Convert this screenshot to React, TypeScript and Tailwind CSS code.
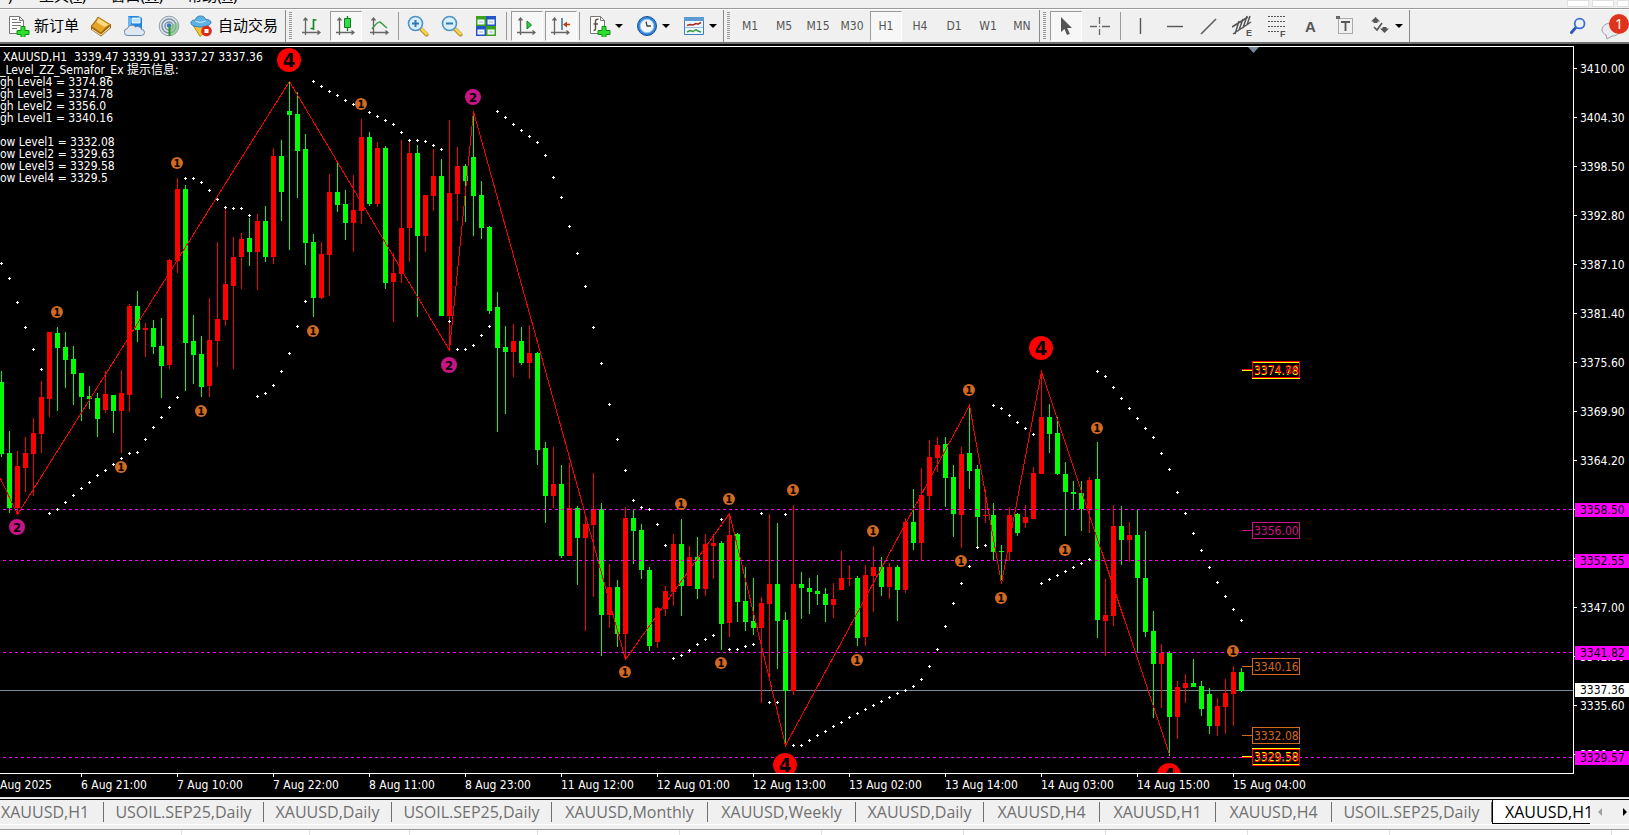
import type { ReactNode } from "react";
import clsx from "clsx";

const UP = 1;
const DN = 0;

// side, high, body top, body bottom, low
const candles = [
  [DN, 371, 382, 454, 457], [DN, 431, 453, 508, 513], [UP, 451, 466, 508, 514], [UP, 437, 453, 468, 492],
  [UP, 418, 433, 454, 496], [UP, 381, 397, 434, 453], [UP, 332, 332, 399, 417], [DN, 327, 333, 348, 411],
  [DN, 332, 347, 360, 388], [DN, 346, 359, 374, 405], [DN, 373, 373, 397, 421], [DN, 386, 396, 399, 409],
  [DN, 393, 398, 419, 437], [UP, 371, 394, 410, 413], [DN, 395, 395, 411, 433], [UP, 370, 393, 411, 453],
  [UP, 304, 306, 395, 412], [DN, 291, 306, 330, 342], [UP, 323, 328, 330, 357], [DN, 320, 328, 347, 354],
  [DN, 318, 346, 366, 398], [UP, 259, 260, 365, 369], [UP, 178, 189, 261, 273], [DN, 185, 189, 343, 391],
  [DN, 315, 341, 355, 384], [DN, 336, 354, 387, 397], [UP, 298, 340, 386, 397], [UP, 242, 319, 341, 367],
  [UP, 209, 284, 320, 326], [UP, 237, 257, 286, 369], [UP, 233, 239, 257, 289], [DN, 218, 238, 252, 266],
  [UP, 214, 221, 252, 290], [DN, 206, 221, 257, 262], [UP, 148, 156, 257, 264], [DN, 140, 156, 192, 221],
  [DN, 81, 111, 115, 250], [DN, 92, 114, 151, 198], [DN, 134, 149, 243, 265], [DN, 234, 242, 298, 317],
  [UP, 242, 254, 298, 299], [UP, 174, 192, 255, 296], [DN, 162, 192, 205, 212], [DN, 190, 204, 223, 240],
  [UP, 175, 210, 223, 252], [UP, 119, 137, 211, 224], [DN, 132, 137, 204, 206], [UP, 142, 148, 204, 207],
  [DN, 146, 148, 283, 289], [UP, 253, 273, 282, 322], [UP, 140, 228, 274, 283], [UP, 142, 153, 228, 262],
  [DN, 145, 153, 236, 317], [UP, 195, 195, 236, 252], [UP, 149, 176, 196, 211], [DN, 159, 176, 316, 316],
  [UP, 120, 193, 316, 350], [UP, 147, 166, 194, 221], [DN, 164, 166, 181, 222], [DN, 116, 157, 196, 236],
  [DN, 181, 195, 228, 239], [DN, 226, 227, 311, 314], [DN, 292, 307, 348, 432], [DN, 326, 347, 352, 414],
  [UP, 324, 341, 352, 377], [DN, 327, 341, 363, 365], [UP, 325, 353, 363, 379], [DN, 352, 353, 450, 465],
  [DN, 442, 448, 496, 523], [UP, 447, 484, 496, 508], [DN, 465, 484, 556, 558], [UP, 463, 508, 556, 556],
  [DN, 506, 508, 538, 585], [UP, 516, 524, 538, 631], [UP, 473, 509, 525, 597], [DN, 503, 509, 615, 656],
  [UP, 564, 587, 615, 628], [DN, 580, 587, 634, 647], [UP, 507, 518, 634, 659], [DN, 510, 518, 531, 564],
  [DN, 524, 530, 570, 579], [DN, 567, 570, 646, 651], [UP, 607, 608, 642, 648], [UP, 586, 591, 609, 616],
  [UP, 534, 544, 592, 606], [DN, 519, 544, 586, 616], [UP, 546, 557, 586, 586], [DN, 537, 557, 589, 599],
  [UP, 534, 544, 589, 596], [UP, 534, 543, 546, 579], [DN, 541, 543, 624, 650], [UP, 513, 535, 623, 637],
  [DN, 533, 534, 602, 622], [DN, 567, 601, 622, 631], [DN, 578, 621, 628, 635], [UP, 597, 603, 628, 703],
  [UP, 514, 584, 604, 680], [DN, 523, 584, 621, 669], [DN, 612, 620, 691, 745], [UP, 505, 584, 691, 695],
  [DN, 572, 584, 588, 619], [DN, 578, 588, 592, 614], [DN, 575, 591, 594, 605], [DN, 588, 594, 605, 622],
  [UP, 583, 599, 605, 618], [UP, 551, 578, 590, 590], [UP, 565, 578, 579, 586], [DN, 576, 578, 638, 646],
  [UP, 565, 575, 637, 646], [UP, 546, 567, 576, 612], [DN, 557, 567, 587, 596], [UP, 563, 567, 587, 599],
  [DN, 565, 567, 590, 621], [UP, 518, 522, 590, 593], [DN, 489, 522, 543, 550], [UP, 468, 495, 543, 560],
  [UP, 440, 457, 496, 510], [UP, 437, 445, 458, 472], [DN, 437, 444, 478, 507], [DN, 465, 477, 514, 537],
  [UP, 447, 454, 515, 548], [DN, 408, 453, 471, 489], [DN, 465, 469, 517, 547], [UP, 489, 515, 516, 523],
  [DN, 503, 515, 552, 560], [DN, 545, 551, 552, 580], [UP, 507, 515, 552, 561], [DN, 513, 514, 533, 536],
  [UP, 505, 517, 523, 528], [UP, 467, 473, 519, 519], [UP, 371, 417, 474, 474], [DN, 404, 417, 434, 453],
  [DN, 417, 433, 474, 475], [DN, 462, 474, 492, 536], [DN, 481, 492, 494, 509], [DN, 481, 493, 509, 531],
  [UP, 477, 480, 510, 533], [DN, 442, 479, 620, 638], [UP, 579, 615, 621, 656], [UP, 505, 526, 616, 626],
  [DN, 506, 526, 540, 565], [UP, 522, 535, 540, 562], [DN, 510, 535, 578, 652], [DN, 531, 578, 632, 637],
  [DN, 611, 631, 664, 718], [UP, 644, 653, 664, 708], [DN, 651, 653, 717, 756], [UP, 681, 687, 717, 739],
  [UP, 674, 683, 688, 703], [DN, 659, 683, 687, 687], [DN, 681, 686, 709, 716], [DN, 688, 694, 726, 734],
  [UP, 698, 706, 726, 736], [UP, 679, 693, 707, 734], [UP, 666, 672, 694, 726], [DN, 668, 672, 691, 692],
];

// parabolic SAR, one value per bar
const sar = [
  263, 278, 302, 327, 349, 369, 513, 509, 502, 495, 488, 482, 475, 470, 464, 458, 453, 452, 439, 427, 417, 407, 397,
  178, 178, 182, 190, 199, 207, 208, 208, 215, 396, 393, 385, 371, 353, 326, 301, 81, 86, 91, 95, 100, 104, 107, 112,
  116, 120, 124, 132, 140, 140, 141, 145, 149, 321, 349, 349, 345, 335, 326, 111, 117, 124, 130, 136, 142, 155, 177,
  197, 226, 253, 286, 327, 363, 404, 439, 470, 500, 507, 509, 524, 545, 658, 655, 650, 644, 639, 635, 519, 649, 649,
  646, 644, 513, 702, 702, 514, 745, 745, 740, 735, 731, 726, 722, 717, 713, 709, 705, 701, 697, 693, 690, 686, 679,
  666, 649, 626, 603, 583, 566, 547, 545, 405, 408, 415, 422, 428, 434, 583, 579, 575, 571, 567, 563, 559, 371, 376,
  387, 398, 408, 418, 428, 437, 453, 469, 492, 513, 533, 550, 567, 582, 596, 609, 620,
];

const zigzag =
  "0,478 17,514 289,81 449,350 473,111 625,659 729,513 785,745 969,405 1001,583 1041,371 1169,754";

const semafors = [
  [1, 57, 312], [1, 121, 467], [1, 201, 411], [1, 313, 331], [1, 177, 163], [1, 361, 104], [1, 681, 504],
  [1, 729, 499], [1, 793, 490], [1, 873, 531], [1, 625, 672], [1, 721, 663], [1, 857, 660], [1, 969, 390],
  [1, 961, 561], [1, 1001, 598], [1, 1065, 550], [1, 1097, 428], [1, 1233, 651],
  [2, 17, 527], [2, 449, 365], [2, 473, 97],
  [4, 289, 60], [4, 785, 765], [4, 1041, 348], [4, 1169, 775],
];

const semaforStyle: Record<number, { r: number; fill: string; size: number; dy: number }> = {
  1: { r: 6, fill: "#d2691e", size: 11, dy: 4 },
  2: { r: 8, fill: "#c71585", size: 13, dy: 5 },
  4: { r: 12, fill: "#ff0000", size: 20, dy: 7 },
};

const levelLines = [509, 560, 652, 757];

const priceTags = [
  { y: 370, color: "#ffff00", text: "3374.78" },
  { y: 369, color: "#ff0000", text: "3374.86" },
  { y: 530, color: "#c71585", text: "3356.00" },
  { y: 666, color: "#d2691e", text: "3340.16" },
  { y: 735, color: "#d2691e", text: "3332.08" },
  { y: 756, color: "#ffff00", text: "3329.58" },
  { y: 757, color: "#ff0000", text: "3329.50" },
];

const prices = [
  "3410.00", "3404.30", "3398.50", "3392.80", "3387.10", "3381.40", "3375.60", "3369.90",
  "3364.20", "3358.50", "3352.70", "3347.00", "3341.30", "3335.60", "3329.80",
];

const priceBadges = [
  { top: "top-[457px]", text: "3358.50", tone: "bg-[#ff00ff]" },
  { top: "top-[508px]", text: "3352.55", tone: "bg-[#ff00ff]" },
  { top: "top-[600px]", text: "3341.82", tone: "bg-[#ff00ff]" },
  { top: "top-[637px]", text: "3337.36", tone: "bg-white" },
  { top: "top-[705px]", text: "3329.57", tone: "bg-[#ff00ff]" },
];

const times = [
  "6 Aug 21:00", "7 Aug 10:00", "7 Aug 22:00", "8 Aug 11:00", "8 Aug 23:00", "11 Aug 12:00", "12 Aug 01:00",
  "12 Aug 13:00", "13 Aug 02:00", "13 Aug 14:00", "14 Aug 03:00", "14 Aug 15:00", "15 Aug 04:00",
];

const levels = [
  "gh Level4 = 3374.86", "gh Level3 = 3374.78", "gh Level2 = 3356.0", "gh Level1 = 3340.16", "",
  "ow Level1 = 3332.08", "ow Level2 = 3329.63", "ow Level3 = 3329.58", "ow Level4 = 3329.5",
];

const tabs = [
  { label: "XAUUSD,H1", width: "w-[104px] pl-px text-left" },
  { label: "USOIL.SEP25,Daily", width: "w-[160px]" },
  { label: "XAUUSD,Daily", width: "w-[128px]" },
  { label: "USOIL.SEP25,Daily", width: "w-[160px]" },
  { label: "XAUUSD,Monthly", width: "w-[156px]" },
  { label: "XAUUSD,Weekly", width: "w-[148px]" },
  { label: "XAUUSD,Daily", width: "w-[128px]" },
  { label: "XAUUSD,H4", width: "w-[116px]" },
  { label: "XAUUSD,H1", width: "w-[116px]" },
  { label: "XAUUSD,H4", width: "w-[116px]" },
  { label: "USOIL.SEP25,Daily", width: "w-[160px]" },
];

const timeframes = ["M1", "M5", "M15", "M30", "H1", "H4", "D1", "W1", "MN"];

const Icon = ({ children, size = "h-[22px] w-[22px]" }: { children: ReactNode; size?: string }) => (
  <svg viewBox="0 0 22 22" className={clsx("shrink-0", size)} fill="none" aria-hidden="true">
    {children}
  </svg>
);

const Plus = () => (
  <path d="M13 11.5h4v4h4v4h-4v3h-4v-3H9v-4h4z" fill="#2ce02c" stroke="#0a8f14" />
);

const NewOrderIcon = () => (
  <Icon>
    <path d="M1.500 1.500h10l4 4v13h-14z" fill="#fff" stroke="#777" />
    <path d="M11.500 1.500v4h4" stroke="#777" />
    <path d="M4 4.500h5M4 7.500h9M4 10.500h9M4 13.500h5" stroke="#777" />
    <Plus />
  </Icon>
);

const BookIcon = () => (
  <Icon>
    <path d="M1 11L8 2l13 8v3l-10 8.500-10-7z" fill="#9c5f0a" />
    <path d="M2 13.500l9 6 9-8v1.500l-9 7.500-9-6z" fill="#fdf3c7" />
    <path d="M1 11C4 9.500 6 6 8 2l13 8c-4 1-7 4-10 8z" fill="#e3a526" stroke="#a96d10" strokeWidth=".8" />
    <path d="M8.500 3.500l10 6-4 2.500-8-5z" fill="#f9db80" />
  </Icon>
);

const ServerIcon = () => (
  <Icon>
    <path d="M4 1h10l4 2v11H4z" fill="#1f86e0" />
    <path d="M8 3h8v5H8z" fill="#bfe3ff" stroke="#fff" strokeWidth=".8" />
    <path d="M4 1v12l3 1V3z" fill="#66b7f7" />
    <path d="M4 20.500a3.500 3.500 0 01-.5-7 4.500 4.500 0 018-1.500 4 4 0 016 2.500 3 3 0 010 6z" fill="#dfe7f2" stroke="#6f86a9" />
  </Icon>
);

const SignalIcon = () => (
  <Icon>
    <circle cx="11" cy="11" r="9.800" fill="#dfe5e9" stroke="#8ea0ae" />
    <circle cx="11" cy="11" r="7" stroke="#7f93ab" strokeWidth="1.500" />
    <circle cx="11" cy="11" r="4" stroke="#7f93ab" strokeWidth="1.500" />
    <path d="M11 11l8.500-4a9.500 9.500 0 01-8.500 14z" fill="#7cc47c" opacity=".6" />
    <circle cx="11" cy="10.500" r="2.200" fill="#3e79c4" />
    <path d="M10.500 12h2v9h-2z" fill="#2b9a2b" />
  </Icon>
);

const AutoTradeIcon = () => (
  <Icon>
    <path d="M3 10l14-1 2 4-9 8.500z" fill="#f5c63b" stroke="#c68b11" />
    <path d="M1 8c0-3 3-3 4.500-3C6 2 8 1 10.500 1S15 2 15.500 4.500c3 0 5.500 1 5.500 3S16 12 10.500 12 1 10.500 1 8z" fill="#5fb0e4" stroke="#2f7fb7" />
    <path d="M5.500 6c3 1.800 7 1.800 10 0" stroke="#d5efff" />
    <circle cx="16.500" cy="16" r="5.300" fill="#dc2a18" />
    <path d="M14.500 14h4v4h-4z" fill="#fff" />
  </Icon>
);

const Axes = () => (
  <path d="M4.500 3v17M1 17.500h17M2.500 5.500l2-2.500 2 2.500M16.500 15.500l2.500 2-2.500 2" stroke="#666" strokeWidth="1.300" />
);

const BarsIcon = () => (
  <Icon>
    <Axes />
    <path d="M12.500 4v11M12.500 5h3M9.500 13.500h3" stroke="#178a2a" strokeWidth="1.700" />
  </Icon>
);

const CandleIcon = () => (
  <Icon>
    <Axes />
    <path d="M12.500 1v15" stroke="#0f7d1e" strokeWidth="1.300" />
    <path d="M9.500 3.500h6v9h-6z" fill="#35d94c" stroke="#0f7d1e" />
  </Icon>
);

const LineIcon = () => (
  <Icon>
    <Axes />
    <path d="M3 14c3-4 6-8 8-7s3 3 7 6" stroke="#3a9a4a" strokeWidth="1.500" />
  </Icon>
);

const ZoomGlass = ({ plus }: { plus?: boolean }) => (
  <Icon>
    <path d="M14 14l5.500 5.500" stroke="#b88d1c" strokeWidth="4" strokeLinecap="round" />
    <path d="M14 13.500l5.500 5.500" stroke="#f6d24f" strokeWidth="2.500" strokeLinecap="round" />
    <circle cx="8.500" cy="8.500" r="7" fill="#d9effb" stroke="#4a93c6" strokeWidth="1.600" />
    <path d="M5 8.500h7" stroke="#2f78b2" strokeWidth="2" />
    {plus && <path d="M8.500 5v7" stroke="#2f78b2" strokeWidth="2" />}
  </Icon>
);

const TileIcon = () => (
  <Icon>
    <path d="M1 1h10v10H1zM11 11h10v10H11z" fill="#3aa21c" />
    <path d="M11 1h10v10H11zM1 11h10v10H1z" fill="#2456c8" />
    <path d="M2.500 4.500h7v5h-7zM12.500 4.500h7v5h-7zM2.500 14.500h7v5h-7zM12.500 14.500h7v5h-7z" fill="#f4f8ff" />
    <path d="M4 7h4M14 7h4M4 17h4M14 17h4" stroke="#9fb6d8" />
  </Icon>
);

const AutoScrollIcon = () => (
  <Icon>
    <Axes />
    <path d="M11 6v8l4.500-4z" fill="#2fcf45" stroke="#12801f" />
  </Icon>
);

const ShiftIcon = () => (
  <Icon>
    <Axes />
    <path d="M12 3v12" stroke="#2d6fa8" strokeWidth="1.500" />
    <path d="M20 9.500h-5" stroke="#b8400f" strokeWidth="1.600" />
    <path d="M13 9.500l4-3v6z" fill="#b8400f" />
  </Icon>
);

const IndicatorIcon = () => (
  <Icon>
    <path d="M1.500 1.500h10l4 4v13h-14z" fill="#fff" stroke="#777" />
    <path d="M11.500 1.500v4h4" stroke="#777" />
    <path d="M9.500 4.500c-2-.8-3 .2-3 2v7c0 1.500-.8 2-2 2M4.500 9h4.500" stroke="#5a5145" strokeWidth="1.500" />
    <Plus />
  </Icon>
);

const ClockIcon = () => (
  <Icon>
    <circle cx="11" cy="11" r="9.500" fill="#2f86df" stroke="#164f93" />
    <circle cx="11" cy="11" r="6.800" fill="#f2f7fc" stroke="#9cc7ee" />
    <path d="M10 6.500l1 4.500h4" stroke="#444" strokeWidth="1.300" />
  </Icon>
);

const TemplateIcon = () => (
  <Icon>
    <path d="M1.500 2.500h19v17h-19z" fill="#eef6fd" stroke="#3b7fc0" />
    <path d="M1 2h20v4H1z" fill="#5d9ad3" />
    <path d="M4 10.500l3-1 3 .5 3-1.500 2 .7 3-1.700" stroke="#a62a17" strokeWidth="1.500" />
    <path d="M2 12.500h18" stroke="#9dbfdf" />
    <path d="M4 17l3-1.500 3 1 3-2 2 1.500 3 1" stroke="#2f9a3f" strokeWidth="1.400" />
  </Icon>
);

const CursorIcon = () => (
  <Icon>
    <path d="M6 2v15l3.500-3 2.500 6 2.800-1.300-2.600-5.700H17z" fill="#555" />
  </Icon>
);

const CrosshairIcon = () => (
  <Icon>
    <path d="M1 11.500h7M13 11.500h8M10.500 2v7M10.500 14v6M10 11.500h1" stroke="#666" strokeWidth="1.300" />
  </Icon>
);

const VLineIcon = () => (
  <Icon>
    <path d="M10.500 3v16" stroke="#555" strokeWidth="1.400" />
  </Icon>
);

const HLineIcon = () => (
  <Icon>
    <path d="M3 11.500h16" stroke="#555" strokeWidth="1.400" />
  </Icon>
);

const TrendIcon = () => (
  <Icon>
    <path d="M3 19L18 4" stroke="#666" strokeWidth="1.700" />
  </Icon>
);

const IconLetter = ({ children, x, y, size }: { children: string; x: number; y: number; size: number }) => (
  <text x={x} y={y} fontSize={size} fontWeight="700" fill="#555" className="font-['Liberation_Sans',sans-serif]">
    {children}
  </text>
);

const ChannelIcon = () => (
  <Icon>
    <path d="M0 12L16 2M1 19L19 7M3 19L7 6M7 15l4-11M11 13l4-12M15 10l3-9" stroke="#555" strokeWidth="1.500" />
    <IconLetter x={14} y={21} size={9}>E</IconLetter>
  </Icon>
);

const FiboIcon = () => (
  <Icon>
    <path d="M2 1.500h18M2 6.500h18M2 11.500h18M2 16.500h11" stroke="#555" strokeDasharray="2 1" />
    <IconLetter x={14} y={22} size={9}>F</IconLetter>
  </Icon>
);

const TextIcon = () => (
  <Icon>
    <IconLetter x={5} y={17} size={15}>A</IconLetter>
  </Icon>
);

const LabelIcon = () => (
  <Icon>
    <path d="M4.500 3.500h14v15h-14z" stroke="#666" strokeDasharray="1 1" />
    <path d="M2 1h4v3H2z" fill="#666" />
    <path d="M7 7h9M11.500 7v9" stroke="#555" strokeWidth="1.800" />
  </Icon>
);

const ArrowsIcon = () => (
  <Icon>
    <path d="M6.500 2l4.500 4.500H8.500V8h-4V6.500H2zM15.500 18L11 13.500h2.500V12h4v1.500H20z" fill="#555" />
    <path d="M5 12l3 3 5-7" stroke="#555" strokeWidth="1.600" />
  </Icon>
);

const Tool = ({ label, children, pressed }: { label: string; children: ReactNode; pressed?: boolean }) => (
  <button
    type="button"
    aria-label={label}
    aria-pressed={pressed}
    className={clsx(
      "mx-px flex h-[30px] w-8 shrink-0 items-center justify-center border",
      pressed ? "border-t-[#9a9a9a] border-r-white border-b-white border-l-[#9a9a9a] bg-[#f7f7f7]" : "border-transparent",
    )}
  >
    {children}
  </button>
);

const MenuTool = ({ label, children }: { label: string; children: ReactNode }) => (
  <button type="button" aria-label={label} className="flex h-[30px] w-[47px] shrink-0 items-center gap-1 pl-[7px]">
    {children}
    <span className="border-x-4 border-t-4 border-x-transparent border-t-black" />
  </button>
);

const Separator = ({ wide }: { wide?: boolean }) => (
  <span className={clsx("flex h-7 shrink-0", wide ? "w-[7px] pl-[3px]" : "w-1 pl-px")}>
    <span className="w-px bg-[#9a9a9a]" />
  </span>
);

const Grip = () => (
  <span className="mx-[3px] h-7 w-[3px] shrink-0 bg-[repeating-linear-gradient(#9a9a9a_0_1px,#f0f0f0_1px_2px)]" />
);

const ToolGroup = ({ children, className }: { children: ReactNode; className?: string }) => (
  <div className={clsx("flex h-8 shrink-0 items-center border-r border-[#8a8a8a]", className)}>{children}</div>
);

const Menu = () => (
  <nav className="flex h-2 items-end justify-between overflow-hidden bg-[#f0f0f0]">
    <div className="flex items-end gap-6 pb-[3px] pl-2 font-['Noto_Sans','Noto_Sans_CJK_SC',sans-serif] text-[15px] leading-5 whitespace-nowrap text-black">
      <span className="w-[7px]">)</span>
      <span>工具(<u>T</u>)</span>
      <span>窗口(<u>W</u>)</span>
      <span>帮助(<u>H</u>)</span>
    </div>
    <div className="flex gap-[3px]">
      <span className="mb-px h-[7px] w-[22px] border border-[#e0e0e0] bg-white" />
      <span className="mb-px h-[7px] w-[22px] border border-[#e0e0e0] bg-white" />
      <span className="mb-px h-[7px] w-3 border border-[#e0e0e0] bg-white" />
    </div>
  </nav>
);

const Toolbar = () => (
  <div className="flex h-[34px] items-center border-t border-[#9a9a9a] bg-[#f0f0f0] shadow-[inset_0_1px_0_#fff]">
    <ToolGroup className="w-[286px] pl-2 font-['Noto_Sans_CJK_SC',sans-serif] text-[15px] text-black">
      <button type="button" className="flex w-[76px] items-center gap-1 whitespace-nowrap">
        <NewOrderIcon />
        新订单
      </button>
      <Tool label="Market"><BookIcon /></Tool>
      <Tool label="Server"><ServerIcon /></Tool>
      <Tool label="Signals"><SignalIcon /></Tool>
      <button type="button" className="flex items-center gap-[6px] pl-1 whitespace-nowrap">
        <AutoTradeIcon />
        自动交易
      </button>
    </ToolGroup>
    <ToolGroup>
      <Grip />
      <Tool label="Bar chart"><BarsIcon /></Tool>
      <Tool label="Candlesticks" pressed><CandleIcon /></Tool>
      <Tool label="Line chart"><LineIcon /></Tool>
      <Separator />
      <Tool label="Zoom in"><ZoomGlass plus /></Tool>
      <Tool label="Zoom out"><ZoomGlass /></Tool>
      <Tool label="Tile windows"><TileIcon /></Tool>
      <Separator wide />
      <Tool label="Auto scroll" pressed><AutoScrollIcon /></Tool>
      <Tool label="Chart shift" pressed><ShiftIcon /></Tool>
      <Separator />
      <MenuTool label="Indicators"><IndicatorIcon /></MenuTool>
      <MenuTool label="Periods"><ClockIcon /></MenuTool>
      <MenuTool label="Templates"><TemplateIcon /></MenuTool>
    </ToolGroup>
    <ToolGroup>
      <Grip />
      {timeframes.map((tf) => (
        <Tool key={tf} label={tf} pressed={tf === "H1"}>
          <span className="font-['DejaVu_Sans_Condensed','DejaVu_Sans',sans-serif] text-xs text-[#555]">{tf}</span>
        </Tool>
      ))}
    </ToolGroup>
    <ToolGroup>
      <Grip />
      <Tool label="Cursor" pressed><CursorIcon /></Tool>
      <Tool label="Crosshair"><CrosshairIcon /></Tool>
      <Separator wide />
      <Tool label="Vertical line"><VLineIcon /></Tool>
      <Tool label="Horizontal line"><HLineIcon /></Tool>
      <Tool label="Trendline"><TrendIcon /></Tool>
      <Tool label="Equidistant channel"><ChannelIcon /></Tool>
      <Tool label="Fibonacci"><FiboIcon /></Tool>
      <Tool label="Text"><TextIcon /></Tool>
      <Tool label="Text label"><LabelIcon /></Tool>
      <MenuTool label="Arrows"><ArrowsIcon /></MenuTool>
    </ToolGroup>
    <div className="ml-auto flex items-center gap-[10px]">
      <button type="button" aria-label="Search">
        <Icon size="h-[18px] w-[18px]">
          <path d="M9 12l-6 7" stroke="#2a57b8" strokeWidth="3.500" strokeLinecap="round" />
          <circle cx="13" cy="8" r="6" fill="#eaf1fb" stroke="#3f6fc9" strokeWidth="2.200" />
        </Icon>
      </button>
      <button type="button" aria-label="Messages" className="relative h-7 w-8">
        <svg viewBox="0 0 32 28" className="h-7 w-8" fill="none" aria-hidden="true">
          <path d="M5 18c0-4 4-7 9-7s9 3 9 7-4 6-8 6l-5 3-1-4c-2-1-4-3-4-5z" fill="#ececf0" stroke="#9c9ca4" />
        </svg>
        <span className="absolute top-[2px] right-0 h-5 w-5 rounded-full bg-[#e0331b] text-center font-['Noto_Sans',sans-serif] text-sm leading-5 text-white">
          1
        </span>
      </button>
    </div>
  </div>
);

const Candles = () => (
  <g>
    {candles.map(([up, high, top, bottom, low], i) => (
      <g key={i} fill={up ? "#ff0000" : "#00ff00"}>
        <rect x={8 * i + 1} y={high} width={1} height={low - high} />
        <rect x={8 * i - 1} y={top} width={5} height={bottom - top} />
      </g>
    ))}
  </g>
);

const Sar = () => (
  <path fill="#fff" d={sar.map((y, i) => `M${8 * i} ${y}h3v1h-3zM${8 * i + 1} ${y - 1}h1v3h-1z`).join("")} />
);

const Semafor = ({ level, x, y }: { level: number; x: number; y: number }) => {
  const s = semaforStyle[level];
  return (
    <g>
      <circle cx={x} cy={y} r={s.r} fill={s.fill} />
      <text x={x} y={y + s.dy} fontSize={s.size} fontWeight="700" textAnchor="middle" fill="#000">
        {level}
      </text>
    </g>
  );
};

const PriceTag = ({ y, color, text }: { y: number; color: string; text: string }) => (
  <g>
    <path d={`M1242 ${y + 0.5}h10`} stroke={color} shapeRendering="crispEdges" />
    <rect x={1252.5} y={y - 7.5} width={47} height={16} fill="none" stroke={color} shapeRendering="crispEdges" />
    <text x={1254} y={y + 5} fontSize={12} fill={color}>
      {text}
    </text>
  </g>
);

const Plot = () => (
  <svg className="block h-[726px] w-full font-['DejaVu_Sans_Condensed','DejaVu_Sans',sans-serif]" role="img" aria-label="XAUUSD H1">
    {/* values are counted from the window top, the plot starts at 47 */}
    <g transform="translate(0 -47)">
      <g shapeRendering="crispEdges">
        <line x1="0" x2="100%" y1="690.5" y2="690.5" stroke="#778899" />
        <Candles />
        <polyline points={zigzag} fill="none" stroke="#ff0000" transform="translate(0.5 0.5)" />
        {levelLines.map((y) => (
          <line key={y} x1="3" x2="100%" y1={y + 0.5} y2={y + 0.5} stroke="#ff00ff" strokeDasharray="3 3" />
        ))}
        <Sar />
      </g>
      <path d="M1248 47h11l-5.500 6z" fill="#778899" />
      {semafors.map(([level, x, y]) => (
        <Semafor key={`${x}-${y}`} level={level} x={x} y={y} />
      ))}
      {priceTags.map((tag) => (
        <PriceTag key={tag.text} {...tag} />
      ))}
    </g>
  </svg>
);

const Chart = () => (
  <main className="bg-black pt-[2px] font-['DejaVu_Sans_Condensed','DejaVu_Sans','Noto_Sans_CJK_SC',sans-serif] text-xs text-white">
    <div className="flex">
      <div className="relative min-w-0 flex-1 overflow-hidden border-y border-r border-white">
        <Plot />
        <div className="absolute top-[3px] left-0 leading-3 whitespace-pre">
          <p className="pl-[3px] leading-[14px]">XAUUSD,H1  3339.47 3339.91 3337.27 3337.36</p>
          <p>_Level_ZZ_Semafor_Ex 提示信息:</p>
          {levels.map((line, i) => (
            <p key={i} className="h-3">{line}</p>
          ))}
        </div>
      </div>
      <div className="relative h-[728px] w-[55px] shrink-0 overflow-hidden">
        <div className="-mt-[2px]">
          {prices.map((price) => (
            <div key={price} className="flex h-[49px] items-center gap-[3px]">
              <span className="h-px w-[3px] bg-white" />
              {price}
            </div>
          ))}
        </div>
        {priceBadges.map((badge) => (
          <span key={badge.text} className={clsx("absolute right-0 left-px pl-[5px] leading-[14px] text-black", badge.top, badge.tone)}>
            {badge.text}
          </span>
        ))}
      </div>
    </div>
    <div className="flex h-[23px] overflow-hidden whitespace-nowrap">
      <span className="w-[81px] shrink-0 pt-[3px]">Aug 2025</span>
      {times.map((time) => (
        <span key={time} className="w-24 shrink-0">
          <span className="block h-[3px] w-px bg-white" />
          {time}
        </span>
      ))}
    </div>
  </main>
);

const TabBar = () => (
  <footer className="border-t border-[#e0e0e0] bg-[#f0f0f0] font-['Open_Sans','Noto_Sans',sans-serif] text-base text-[#707070]">
    <div className="mt-px flex h-[25px] items-stretch border-t border-black">
      {tabs.map((tab, i) => (
        <button key={i} type="button" className={clsx("flex shrink-0 items-center justify-center whitespace-nowrap", tab.width)}>
          <span className="flex-1 leading-5">{tab.label}</span>
          <span className="h-5 w-px bg-[#707070]" />
        </button>
      ))}
      <button type="button" className="min-w-0 flex-1 overflow-hidden border-b border-l border-black bg-white pl-3 text-left leading-5 whitespace-nowrap text-black">
        XAUUSD,H1
      </button>
      <div className="flex w-[39px] shrink-0 items-center justify-between pr-[2px] pl-2">
        <button type="button" aria-label="Previous tabs" className="border-y-4 border-r-4 border-y-transparent border-r-[#a0a0a0]" />
        <button type="button" aria-label="Next tabs" className="border-y-4 border-l-4 border-y-transparent border-l-black" />
      </div>
    </div>
    <div className="h-[6px] border-t border-b border-t-white border-b-[#9a9a9a]" />
    <div className="flex h-[5px] bg-white">
      <span className="w-[182px] shrink-0 border-r border-[#e0e0e0]" />
      <span className="w-32 shrink-0 border-r border-[#e0e0e0]" />
      <span className="w-[100px] shrink-0 border-r border-[#e0e0e0]" />
      <span className="w-32 shrink-0 border-r border-[#e0e0e0]" />
      <span className="w-[142px] shrink-0 border-r border-[#e0e0e0]" />
      <span className="w-[142px] shrink-0 border-r border-[#e0e0e0]" />
      <span className="w-[142px] shrink-0 border-r border-[#e0e0e0]" />
      <span className="w-[142px] shrink-0 border-r border-[#e0e0e0]" />
      <span className="w-[142px] shrink-0 border-r border-[#e0e0e0]" />
      <span className="w-[142px] shrink-0 border-r border-[#e0e0e0]" />
      <span className="w-[222px] shrink-0 border-r border-[#e0e0e0]" />
    </div>
  </footer>
);

const App = () => {
  return (
    <div className="overflow-hidden">
      <header className="border-b-2 border-[#6e6e6e]">
        <Menu />
        <Toolbar />
      </header>
      <Chart />
      <TabBar />
    </div>
  );
};

export default App;
